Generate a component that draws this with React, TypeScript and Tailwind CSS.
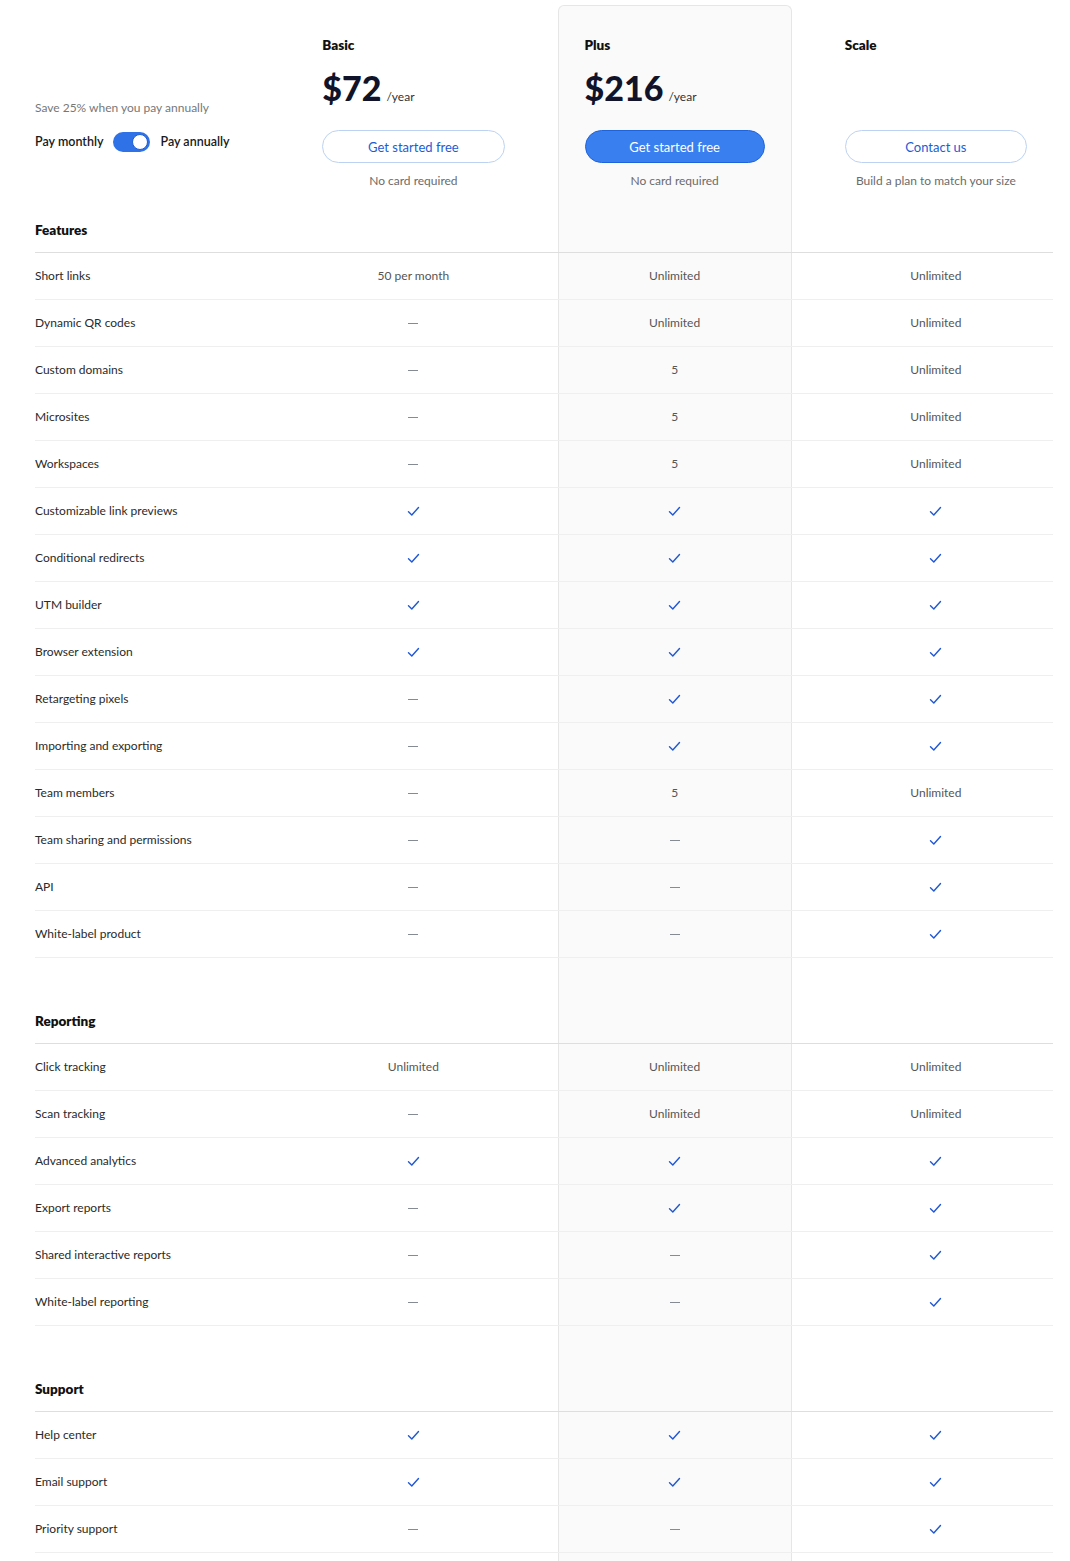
import React from 'react';

type Val = string | boolean;

const features: [string, Val, Val, Val][] = [
  ['Short links', '50 per month', 'Unlimited', 'Unlimited'],
  ['Dynamic QR codes', false, 'Unlimited', 'Unlimited'],
  ['Custom domains', false, '5', 'Unlimited'],
  ['Microsites', false, '5', 'Unlimited'],
  ['Workspaces', false, '5', 'Unlimited'],
  ['Customizable link previews', true, true, true],
  ['Conditional redirects', true, true, true],
  ['UTM builder', true, true, true],
  ['Browser extension', true, true, true],
  ['Retargeting pixels', false, true, true],
  ['Importing and exporting', false, true, true],
  ['Team members', false, '5', 'Unlimited'],
  ['Team sharing and permissions', false, false, true],
  ['API', false, false, true],
  ['White-label product', false, false, true],
];

const reporting: [string, Val, Val, Val][] = [
  ['Click tracking', 'Unlimited', 'Unlimited', 'Unlimited'],
  ['Scan tracking', false, 'Unlimited', 'Unlimited'],
  ['Advanced analytics', true, true, true],
  ['Export reports', false, true, true],
  ['Shared interactive reports', false, false, true],
  ['White-label reporting', false, false, true],
];

const support: [string, Val, Val, Val][] = [
  ['Help center', true, true, true],
  ['Email support', true, true, true],
  ['Priority support', false, false, true],
];

const plusCell = 'bg-[#fafafa] border-x border-[#e6e6e6]';

const Check = () => (
  <svg width="13" height="11" viewBox="0 0 13 11" fill="none">
    <path d="M1.5 5.8 L4.8 9 L11.5 1.5" stroke="#1f57d6" strokeWidth="1.4" strokeLinecap="round" strokeLinejoin="round" />
  </svg>
);

const Dash = () => <span className="block h-px w-[10px] bg-[#858a93]" />;

const Cell = ({ v }: { v: Val }) => {
  if (v === true) return <Check />;
  if (v === false) return <Dash />;
  return <span className="text-[12px] text-[#555]">{v}</span>;
};

const Row = ({ label, values }: { label: string; values: Val[] }) => (
  <div className="grid grid-cols-4 gap-x-[27px] border-b border-[#efefef]">
    <div className="flex h-[46px] items-center text-[12px] text-[#2a2a2a]">{label}</div>
    {values.map((v, i) => (
      <div key={i} className={`flex h-[46px] items-center justify-center ${i === 1 ? plusCell : ''}`}>
        <Cell v={v} />
      </div>
    ))}
  </div>
);

const SectionTitle = ({ title, tall }: { title: string; tall?: boolean }) => (
  <div className="grid grid-cols-4 gap-x-[27px] border-b border-[#dedede]">
    <div className={`flex items-end pb-[13px] text-[13.5px] font-extrabold leading-[18px] text-[#111] ${tall ? 'h-[85px]' : 'h-[52px]'}`}>
      {title}
    </div>
    <div />
    <div className={plusCell} />
    <div />
  </div>
);

const Section = ({ title, rows, tall }: { title: string; rows: [string, Val, Val, Val][]; tall?: boolean }) => (
  <div>
    <SectionTitle title={title} tall={tall} />
    {rows.map(([label, a, b, c]) => (
      <Row key={label} label={label} values={[a, b, c]} />
    ))}
  </div>
);

const PlanHeader = ({
  name,
  price,
  cta,
  note,
  primary,
  highlight,
}: {
  name: string;
  price?: string;
  cta: string;
  note: string;
  primary?: boolean;
  highlight?: boolean;
}) => (
  <div
    className={`flex h-[195px] flex-col px-[26px] ${
      highlight ? 'rounded-t-[6px] border-x border-t border-[#e6e6e6] bg-[#fafafa] pt-[30px]' : 'pt-[31px]'
    }`}
  >
    <div className="text-[13.5px] font-extrabold leading-[18px] text-[#111]">{name}</div>
    <div className="mt-[14px] flex h-[40px] items-baseline">
      {price && (
        <>
          <span className="text-[34px] font-black leading-[40px] text-[#10132a]">{price}</span>
          <span className="ml-[5px] text-[12px] text-[#333]">/year</span>
        </>
      )}
    </div>
    <button
      className={`mt-[22px] h-[33px] w-full rounded-full pt-[2px] text-[13px] ${
        primary
          ? 'border border-[#1f63dc] bg-[#3a7ff0] text-white'
          : 'border border-[#bcd2f3] bg-white text-[#1b5dd6]'
      }`}
    >
      {cta}
    </button>
    <div className="mt-[10px] text-center text-[12px] leading-[16px] text-[#6b6b6b]">{note}</div>
  </div>
);

export default function App() {
  return (
    <div className="min-h-screen bg-white font-['Lato',sans-serif]">
      <div className="ml-[35px] w-[1018px] pt-[5px]">
        <div className="grid grid-cols-4 gap-x-[27px]">
          <div className="flex flex-col pt-[95px]">
            <div className="text-[12px] leading-[16px] text-[#777]">Save 25% when you pay annually</div>
            <div className="mt-[16px] flex h-[20px] items-center gap-[10px] text-[12.5px] font-semibold text-[#1a1a1a]">
              <span>Pay monthly</span>
              <span className="relative inline-block h-[20px] w-[37px] rounded-full bg-[#2f72e8]">
                <span className="absolute right-[2px] top-[2px] h-[16px] w-[16px] rounded-full border border-[#1f5fd0] bg-white" />
              </span>
              <span>Pay annually</span>
            </div>
          </div>
          <PlanHeader name="Basic" price="$72" cta="Get started free" note="No card required" />
          <PlanHeader name="Plus" price="$216" cta="Get started free" note="No card required" primary highlight />
          <PlanHeader name="Scale" cta="Contact us" note="Build a plan to match your size" />
        </div>
        <Section title="Features" rows={features} />
        <Section title="Reporting" rows={reporting} tall />
        <Section title="Support" rows={support} tall />
        <div className="grid h-[20px] grid-cols-4 gap-x-[27px]">
          <div />
          <div />
          <div className={plusCell} />
          <div />
        </div>
      </div>
    </div>
  );
}
